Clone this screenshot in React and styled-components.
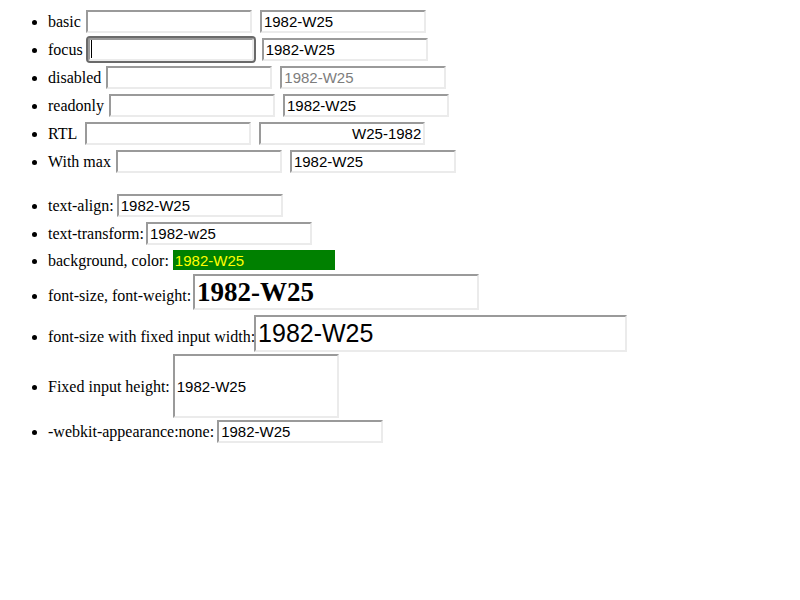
import React from "react";
import styled, { createGlobalStyle } from "styled-components";

const GlobalStyle = createGlobalStyle`
  html, body {
    margin: 0;
    background: #fff;
  }
  body {
    font-family: "Liberation Serif", "Times New Roman", serif;
    font-size: 16px;
    color: #000;
  }
`;

const Page = styled.div`
  padding: 8px 8px 0;
`;

const List = styled.ul`
  margin: 0 0 16px;
  padding-left: 40px;
  list-style: disc;
`;

const Item = styled.li`
  padding: ${(p) => p.$pt ?? 2}px 0 ${(p) => p.$pb ?? 3}px;
`;

const Line = styled.span`
  display: inline-flex;
  align-items: baseline;
  column-gap: ${(p) => p.$gap}px;
  vertical-align: baseline;
`;

const Label = styled.span`
  white-space: nowrap;
`;

const Field = styled.input`
  box-sizing: border-box;
  width: ${(p) => p.$w || 166}px;
  height: ${(p) => p.$h || 23}px;
  margin: 0 0 0 ${(p) => p.$ml || 0}px;
  padding: 1px 2px;
  border: 2px solid;
  border-color: #9a9a9a #ebebeb #ebebeb #9a9a9a;
  border-radius: 0;
  background: #fff;
  color: ${(p) => p.$color || "#000"};
  font-family: "Liberation Sans", Arial, sans-serif;
  font-size: 15px;
  outline: none;
  -webkit-appearance: none;
  appearance: none;
`;

const FocusWrap = styled.span`
  position: relative;
  display: inline-flex;
`;

const FocusField = styled(Field)`
  border-radius: 2px;
  outline: 2px solid #6a6a6a;
  outline-offset: 0;
`;

const Caret = styled.span`
  position: absolute;
  left: 3px;
  top: 2px;
  width: 1px;
  height: 18px;
  background: #000;
`;

const LowerField = styled(Field)`
  text-transform: lowercase;
`;

const ColorField = styled(Field)`
  border: none;
  background: #008000;
  color: #ffff00;
`;

const BigBoldField = styled(Field)`
  font-family: "Liberation Serif", "Times New Roman", serif;
  font-size: 27px;
  font-weight: bold;
`;

const BigField = styled(Field)`
  font-size: 25px;
`;

const WEEK = "1982-W25";

function Pair({ label, lead = 0, disabled, rtl }) {
  return (
    <Line $gap={5}>
      <Label>{label}</Label>
      <Field readOnly disabled={disabled} value="" $ml={lead} />
      <Field
        readOnly
        disabled={disabled}
        dir={rtl ? "rtl" : undefined}
        value={WEEK}
        $ml={3}
        $color={disabled ? "#7d7d7d" : undefined}
      />
    </Line>
  );
}

export default function App() {
  return (
    <Page>
      <GlobalStyle />
      <List>
        <Item>
          <Pair label="basic" />
        </Item>
        <Item>
          <Line $gap={5}>
            <Label>focus</Label>
            <FocusWrap>
              <FocusField readOnly value="" />
              <Caret />
            </FocusWrap>
            <Field readOnly value={WEEK} $ml={3} />
          </Line>
        </Item>
        <Item>
          <Pair label="disabled" disabled />
        </Item>
        <Item>
          <Pair label="readonly" />
        </Item>
        <Item>
          <Pair label="RTL" lead={3} rtl />
        </Item>
        <Item>
          <Pair label="With max" />
        </Item>
      </List>
      <List>
        <Item>
          <Line $gap={3}>
            <Label>text-align:</Label>
            <Field readOnly value={WEEK} />
          </Line>
        </Item>
        <Item>
          <Line $gap={2}>
            <Label>text-transform:</Label>
            <LowerField readOnly value={WEEK} />
          </Line>
        </Item>
        <Item $pb={2}>
          <Line $gap={4}>
            <Label>background, color:</Label>
            <ColorField readOnly value={WEEK} $w={162} $h={20} />
          </Line>
        </Item>
        <Item>
          <Line $gap={2}>
            <Label>font-size, font-weight:</Label>
            <BigBoldField readOnly value={WEEK} $w={286} $h={36} />
          </Line>
        </Item>
        <Item $pb={0}>
          <Line $gap={0}>
            <Label>font-size with fixed input width:</Label>
            <BigField readOnly value={WEEK} $w={373} $h={37} $ml={-1} />
          </Line>
        </Item>
        <Item $pb={0}>
          <Line $gap={3}>
            <Label>Fixed input height:</Label>
            <Field readOnly value={WEEK} $h={64} />
          </Line>
        </Item>
        <Item>
          <Line $gap={3}>
            <Label>-webkit-appearance:none:</Label>
            <Field readOnly value={WEEK} />
          </Line>
        </Item>
      </List>
    </Page>
  );
}
